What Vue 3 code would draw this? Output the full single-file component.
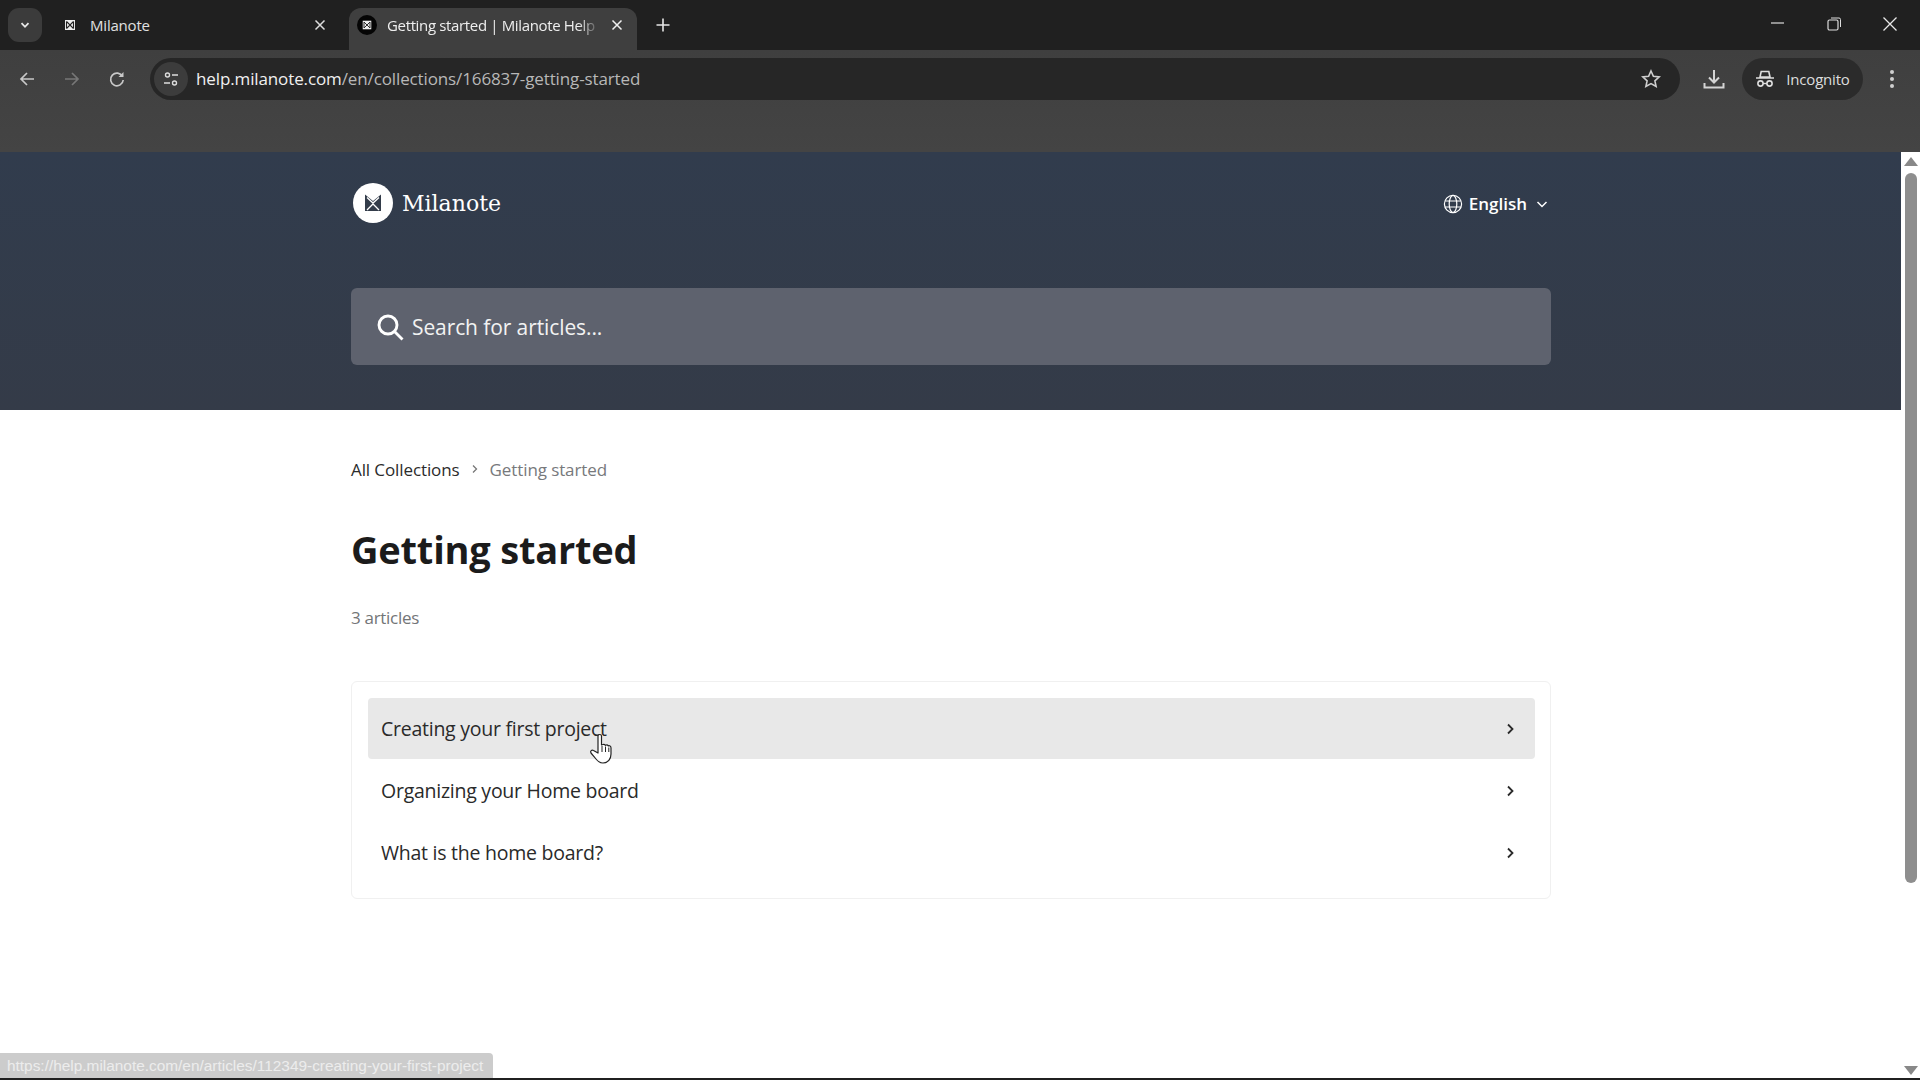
<script setup>
const articles = [
  { title: 'Creating your first project', hover: true },
  { title: 'Organizing your Home board', hover: false },
  { title: 'What is the home board?', hover: false },
]
</script>

<template>
  <div class="window">
    <div class="tabstrip">
      <div class="tab-search">
        <svg width="12" height="12" viewBox="0 0 12 12"><path d="M2.5 4.2 6 7.8l3.5-3.6" fill="none" stroke="#e8e8e8" stroke-width="1.8"/></svg>
      </div>
      <div class="tab">
        <svg class="fav" width="14" height="14" viewBox="0 0 14 14"><rect x="2" y="2" width="10" height="10" fill="#eee"/><path d="M3.5 3.5 7 7l3.5-3.5M3.500 10.500 7 7l3.500 3.500M3.500 3.500v7M10.500 3.500v7" fill="none" stroke="#222" stroke-width="1.1"/></svg>
        <span class="tab-title">Milanote</span>
        <svg class="close" width="14" height="14" viewBox="0 0 14 14"><path d="M2.5 2.5l9 9M11.5 2.5l-9 9" stroke="#ddd" stroke-width="1.5"/></svg>
      </div>
      <div class="tab active">
        <span class="fav-round"><svg width="12" height="12" viewBox="0 0 14 14"><rect x="2" y="2" width="10" height="10" fill="#eee"/><path d="M3.500 3.500 7 7l3.500-3.500M3.500 10.500 7 7l3.500 3.500M3.500 3.500v7M10.500 3.500v7" fill="none" stroke="#222" stroke-width="1.1"/></svg></span>
        <span class="tab-title clip">Getting started | Milanote Help</span>
        <svg class="close" width="14" height="14" viewBox="0 0 14 14"><path d="M2.5 2.5l9 9M11.5 2.5l-9 9" stroke="#f0f0f0" stroke-width="1.5"/></svg>
      </div>
      <svg class="plus" width="16" height="16" viewBox="0 0 16 16"><path d="M8 1.5v13M1.5 8h13" stroke="#e6e6e6" stroke-width="1.6"/></svg>
      <div class="win-controls">
        <svg width="16" height="16" viewBox="0 0 16 16"><path d="M1 7h13" stroke="#ddd" stroke-width="1.2"/></svg>
        <svg width="16" height="16" viewBox="0 0 16 16"><rect x="2" y="4" width="10" height="10" rx="1.5" fill="none" stroke="#ddd" stroke-width="1.2"/><path d="M5 2h8a1.5 1.5 0 0 1 1.5 1.5V11" fill="none" stroke="#ddd" stroke-width="1"/></svg>
        <svg width="16" height="16" viewBox="0 0 16 16"><path d="M1.5 1.5l13 13M14.5 1.5l-13 13" stroke="#e8e8e8" stroke-width="1.3"/></svg>
      </div>
    </div>

    <div class="toolbar">
      <div class="nav-row">
        <div class="nav-icons">
          <svg width="18" height="18" viewBox="0 0 18 18"><path d="M16 9H3M9 3 3 9l6 6" fill="none" stroke="#c8c8c8" stroke-width="1.7"/></svg>
          <svg width="18" height="18" viewBox="0 0 18 18"><path d="M2 9h13M9 3l6 6-6 6" fill="none" stroke="#777" stroke-width="1.7"/></svg>
          <svg width="18" height="18" viewBox="0 0 18 18"><path d="M14.5 6.5A6.3 6.3 0 1 0 15.2 10" fill="none" stroke="#c8c8c8" stroke-width="1.7"/><path d="M15.500 2v5h-5z" fill="#c8c8c8"/></svg>
        </div>
        <div class="omnibox">
          <span class="site-chip">
            <svg width="16" height="16" viewBox="0 0 16 16"><circle cx="4.5" cy="4" r="2" fill="none" stroke="#ddd" stroke-width="1.4"/><path d="M9 4h6M1 12h6" stroke="#ddd" stroke-width="1.5"/><circle cx="11.500" cy="12" r="2" fill="none" stroke="#ddd" stroke-width="1.4"/></svg>
          </span>
          <span class="url"><span class="host">help.milanote.com</span>/en/collections/166837-getting-started</span>
          <svg class="star" width="20" height="20" viewBox="0 0 20 20"><path d="m10 2 2.4 5.3 5.8.6-4.3 3.900 1.200 5.700L10 14.600l-5.100 2.900 1.200-5.700L1.800 7.900l5.800-.6z" fill="none" stroke="#cfcfcf" stroke-width="1.6"/></svg>
        </div>
        <svg class="download" width="22" height="22" viewBox="0 0 22 22"><path d="M11 2v12M6 9.500l5 5 5-5" fill="none" stroke="#d4d4d4" stroke-width="2"/><path d="M1.500 15v4.500h19V15" fill="none" stroke="#d4d4d4" stroke-width="2"/></svg>
        <div class="incognito">
          <svg width="20" height="20" viewBox="0 0 20 20"><path d="M5 8 6.200 2.500h7.600L15 8zM1 9h18" fill="none" stroke="#ddd" stroke-width="1.6"/><circle cx="5.500" cy="14.500" r="2.600" fill="none" stroke="#ddd" stroke-width="1.6"/><circle cx="14.500" cy="14.500" r="2.600" fill="none" stroke="#ddd" stroke-width="1.6"/><path d="M8 14.500h4" stroke="#ddd" stroke-width="1.4"/></svg>
          <span>Incognito</span>
        </div>
        <div class="kebab"><i></i><i></i><i></i></div>
      </div>
    </div>

    <div class="viewport">
      <div class="page">
        <header class="hero">
          <div class="container">
            <div class="hero-top">
              <div class="brand">
                <span class="logo">
                  <svg width="20" height="20" viewBox="0 0 20 20"><path d="M2 1.500 10 8l8-6.500V18H2z" fill="#333c4a"/><path d="M4 4.500 10 10l6-5.500M4 17l6-6 6 6" fill="none" stroke="#fff" stroke-width="1.3"/></svg>
                </span>
                <span class="brand-name">Milanote</span>
              </div>
              <div class="lang">
                <svg width="20" height="20" viewBox="0 0 20 20" fill="none" stroke="#fff" stroke-width="1.2"><circle cx="10" cy="10" r="8.600"/><ellipse cx="10" cy="10" rx="3.800" ry="8.600"/><path d="M2 7h16M2 13h16"/></svg>
                <span>English</span>
                <svg width="12" height="12" viewBox="0 0 12 12"><path d="M1.500 4 6 8.500 10.500 4" fill="none" stroke="#fff" stroke-width="1.5"/></svg>
              </div>
            </div>
            <div class="search">
              <svg width="28" height="28" viewBox="0 0 28 28"><circle cx="12" cy="12" r="9" fill="none" stroke="#fff" stroke-width="2.900"/><path d="m18.500 18.500 8 8" stroke="#fff" stroke-width="2.900"/></svg>
              <span>Search for articles...</span>
            </div>
          </div>
        </header>

        <main class="container content">
          <nav class="crumbs">
            <span class="crumb-link">All Collections</span>
            <svg width="10" height="10" viewBox="0 0 10 10"><path d="m3 1.500 3.500 3.500L3 8.500" fill="none" stroke="#777" stroke-width="1.300"/></svg>
            <span class="crumb-current">Getting started</span>
          </nav>
          <h1>Getting started</h1>
          <p class="count">3 articles</p>
          <section class="card">
            <div v-for="a in articles" :key="a.title" class="row" :class="{ hover: a.hover }">
              <span>{{ a.title }}</span>
              <svg width="12" height="12" viewBox="0 0 12 12"><path d="m4 1.500 4.500 4.500L4 10.500" fill="none" stroke="#2a2a2a" stroke-width="1.800"/></svg>
            </div>
          </section>
        </main>
      </div>

      <aside class="scrollbar">
        <span class="arrow up"></span>
        <div class="thumb-track"><div class="thumb"></div></div>
        <span class="arrow down"></span>
      </aside>

      <div class="status">https://help.milanote.com/en/articles/112349-creating-your-first-project</div>
      <svg class="cursor" width="30" height="32" viewBox="0 0 30 32"><path d="M10 3c0-2 3.500-2 3.500 0v9l1.500-.5c1-.3 2 .2 2.500.8 1-.6 2.200-.3 2.800.6 1-.5 2.700 0 2.700 2V21c0 5-3 9-8 9-3.500 0-5-1.500-7-4l-5-6c-1.200-2 .8-3.500 2.500-2.500L10 20z" fill="#fff" stroke="#222" stroke-width="1.200" stroke-linejoin="round"/><path d="M14 13v6M17.500 13.500V19M20.800 14.500V19" stroke="#222" stroke-width="1"/></svg>
    </div>
    <div class="bottom-edge"></div>
  </div>
</template>

<style>
html, body { margin: 0; background: #fff; overflow: hidden; }
</style>

<style scoped>
.window { width: 1920px; height: 1080px; display: flex; flex-direction: column; overflow: hidden; font-family: "Open Sans", "Noto Sans", sans-serif; }
.tabstrip { height: 50px; background: #202020; display: flex; align-items: flex-start; flex: none; color: #e0e0e0; font-size: 15px; }
.tab-search { width: 34px; height: 34px; margin: 8px 0 0 8px; border-radius: 11px; background: #3b3b3b; display: flex; align-items: center; justify-content: center; flex: none; }
.tab { width: 300px; height: 42px; margin-top: 8px; display: flex; align-items: center; flex: none; box-sizing: border-box; padding: 0 15px 8px 21px; gap: 13px; letter-spacing: -0.2px; }
.tab.active { width: 288px; margin-left: 7px; padding: 0 13px 8px 8px; background: #3f3f3f; border-radius: 12px 12px 0 0; color: #eee; gap: 10px; letter-spacing: -0.35px; }
.tab-title { flex: 1; white-space: nowrap; overflow: hidden; }
.clip { -webkit-mask-image: linear-gradient(to right, #000 90%, transparent); mask-image: linear-gradient(to right, #000 90%, transparent); }
.fav { flex: none; }
.fav-round { width: 20px; height: 20px; background: #050505; border-radius: 50%; display: flex; align-items: center; justify-content: center; flex: none; }
.close { flex: none; }
.plus { margin: 17px 0 0 18px; flex: none; }
.win-controls { margin-left: auto; display: flex; gap: 40px; padding: 16px 22px 0 0; }
.toolbar { height: 102px; flex: none; background: linear-gradient(#3f3f3f, #444); }
.nav-row { height: 57px; display: flex; align-items: center; padding: 0 0 0 18px; box-sizing: border-box; }
.nav-icons { display: flex; gap: 27px; flex: none; }
.omnibox { margin-left: 24px; width: 1530px; height: 42px; border-radius: 21px; background: #262626; display: flex; align-items: center; flex: none; box-sizing: border-box; padding-right: 19px; }
.site-chip { width: 34px; height: 34px; border-radius: 50%; background: #3c3c3c; margin-left: 4px; display: flex; align-items: center; justify-content: center; flex: none; }
.url { margin-left: 8px; font-size: 17px; color: #b8b8b8; flex: 1; letter-spacing: -0.12px; white-space: nowrap; }
.host { color: #f0f0f0; }
.download { margin-left: 23px; flex: none; }
.incognito { margin-left: 17px; width: 121px; height: 42px; border-radius: 21px; background: #2b2b2b; display: flex; align-items: center; justify-content: center; gap: 11px; color: #ddd; font-size: 15px; flex: none; box-sizing: border-box; letter-spacing: -0.2px; }
.kebab { margin-left: 27px; display: flex; flex-direction: column; gap: 3px; flex: none; }
.kebab i { display: block; width: 4px; height: 4px; border-radius: 50%; background: #cfcfcf; }

.viewport { flex: 1; display: flex; position: relative; min-height: 0; }
.page { flex: 1; min-width: 0; background: #fff; }
.hero { height: 258px; background: linear-gradient(#313c4d, #343b48); box-sizing: border-box; padding-top: 30px; }
.container { width: 1200px; margin-left: 351px; }
.hero-top { display: flex; align-items: center; justify-content: space-between; height: 42px; padding-left: 2px; padding-right: 3px; }
.brand { display: flex; align-items: center; gap: 9px; }
.logo { width: 40px; height: 40px; border-radius: 50%; background: #fff; display: flex; align-items: center; justify-content: center; }
.brand-name { font-family: "DejaVu Serif", "Liberation Serif", serif; font-size: 22px; color: #fff; }
.lang { display: flex; align-items: center; gap: 6px; color: #fff; font-size: 17px; font-weight: 600; padding-top: 1px; }
.lang span { margin-right: 3px; }
.search { margin-top: 64px; height: 77px; border-radius: 6px; background: #5e626e; display: flex; align-items: center; gap: 8px; padding-left: 25px; color: #f2f2f2; font-size: 21px; }
.search span { letter-spacing: -0.1px; }

.content { padding-top: 45px; }
.crumbs { height: 28px; display: flex; align-items: center; gap: 10px; font-size: 17px; letter-spacing: -0.1px; }
.crumb-link { color: #2b2b2b; }
.crumb-current { color: #77797c; }
h1 { margin: 31px 0 0; height: 70px; line-height: 70px; font-size: 38px; font-weight: 700; color: #1b1b1b; letter-spacing: -0.2px; }
.count { margin: 19px 0 0; height: 30px; line-height: 30px; font-size: 17px; color: #737577; letter-spacing: -0.3px; }
.card { margin-top: 48px; height: 218px; box-sizing: border-box; padding: 16px 15px 0 16px; border: 1px solid #f0f0f0; border-radius: 6px; }
.row { height: 61px; margin-bottom: 1px; border-radius: 4px; display: flex; align-items: center; justify-content: space-between; padding: 0 19px 0 13px; font-size: 19.5px; color: #2a2a2a; letter-spacing: -0.25px; }
.row.hover { background: #e8e8e8; }
.scrollbar { width: 19px; flex: none; background: #fff; display: flex; flex-direction: column; align-items: center; padding: 5px 0 3px; box-sizing: border-box; }
.arrow { width: 0; height: 0; border-left: 7px solid transparent; border-right: 7px solid transparent; flex: none; }
.arrow.up { border-bottom: 9px solid #888; }
.arrow.down { border-top: 9px solid #888; }
.thumb-track { flex: 1; width: 100%; display: flex; justify-content: center; padding-top: 7px; box-sizing: border-box; }
.thumb { width: 12px; height: 710px; background: #8e8e8e; border-radius: 6px; }
.status { position: absolute; left: 0; bottom: 0; width: 493px; height: 25px; box-sizing: border-box; background: #ccc; border-top-right-radius: 4px; font-size: 15.4px; line-height: 25px; padding-left: 7px; color: #ececec; font-family: "Liberation Sans", sans-serif; white-space: nowrap; overflow: hidden; }
.cursor { position: absolute; left: 588px; top: 581px; pointer-events: none; }
.bottom-edge { height: 2px; background: #202020; flex: none; }
</style>
